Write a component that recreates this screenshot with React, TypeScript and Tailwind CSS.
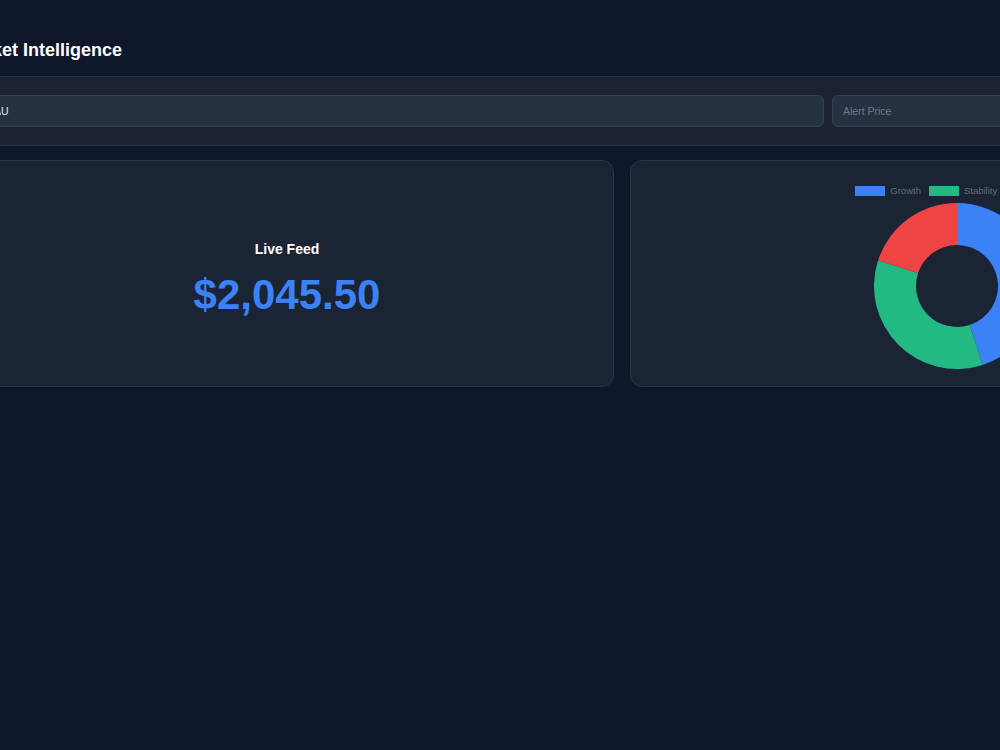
import * as React from "react";

const segments = [
  { label: "Growth", value: 45, color: "#3b82f6" },
  { label: "Stability", value: 35, color: "#22b983" },
  { label: "Risk", value: 20, color: "#ef4444" },
];

function arcPath(a0: number, a1: number, R: number, r: number, c: number) {
  const rad = (a: number) => (a * Math.PI) / 180;
  const p = (rr: number, a: number) => [c + rr * Math.sin(rad(a)), c - rr * Math.cos(rad(a))];
  const large = a1 - a0 > 180 ? 1 : 0;
  const [x0, y0] = p(R, a0);
  const [x1, y1] = p(R, a1);
  const [x2, y2] = p(r, a1);
  const [x3, y3] = p(r, a0);
  return `M${x0} ${y0} A${R} ${R} 0 ${large} 1 ${x1} ${y1} L${x2} ${y2} A${r} ${r} 0 ${large} 0 ${x3} ${y3} Z`;
}

function Doughnut() {
  const total = segments.reduce((s, d) => s + d.value, 0);
  let start = 0;
  return (
    <svg width="166" height="166" viewBox="0 0 166 166">
      {segments.map((d) => {
        const sweep = (d.value / total) * 360;
        const path = arcPath(start, start + sweep, 83, 41, 83);
        start += sweep;
        return <path key={d.label} d={path} fill={d.color} />;
      })}
    </svg>
  );
}

export default function App() {
  return (
    <div className="min-h-screen overflow-hidden bg-[#0f172a] font-['Liberation_Sans',Arial,sans-serif]">
      <div className="w-[1324px] -ml-[40px]">
        <header className="pt-[36px] pb-[12px]">
          <h1 className="text-[18px] leading-[28px] font-bold text-white">Market Intelligence</h1>
        </header>

        <div className="border-y border-[#273244] bg-[#1a2233] px-4 py-[18px]">
          <div className="flex gap-2">
            <input
              defaultValue="XAU"
              className="h-8 w-[848px] rounded-md border border-[#344055] bg-[#263142] px-[10px] text-[10.5px] text-[#e2e8f0] outline-none"
            />
            <input
              placeholder="Alert Price"
              className="h-8 w-[240px] rounded-md border border-[#344055] bg-[#263142] px-[10px] text-[10.5px] text-[#e2e8f0] placeholder:text-[#737780] outline-none"
            />
            <button className="h-8 flex-1 rounded-md bg-[#3b82f6] text-[11px] font-semibold text-white">Set Alert</button>
          </div>
        </div>

        <div className="mt-[14px] grid grid-cols-2 gap-4">
          <div className="flex h-[227px] flex-col items-center justify-center rounded-xl border border-[#2a3446] bg-[#1b2435] pt-[6px]">
            <h2 className="text-[14px] leading-[20px] font-bold text-white">Live Feed</h2>
            <div className="mt-[16px] text-[42px] leading-[40px] font-bold text-[#3b82f6]">$2,045.50</div>
          </div>

          <div className="flex h-[227px] flex-col items-center rounded-xl border border-[#2a3446] bg-[#1b2435] pt-[25px]">
            <div className="flex h-[10px] items-center gap-2">
              {segments.map((d) => (
                <div key={d.label} className="flex items-center gap-[5px]">
                  <span className="h-[10px] w-[30px]" style={{ backgroundColor: d.color }} />
                  <span className="text-[9.5px] leading-[10px] text-[#666b73]">{d.label}</span>
                </div>
              ))}
            </div>
            <div className="mt-[7px]">
              <Doughnut />
            </div>
          </div>
        </div>
      </div>
    </div>
  );
}
